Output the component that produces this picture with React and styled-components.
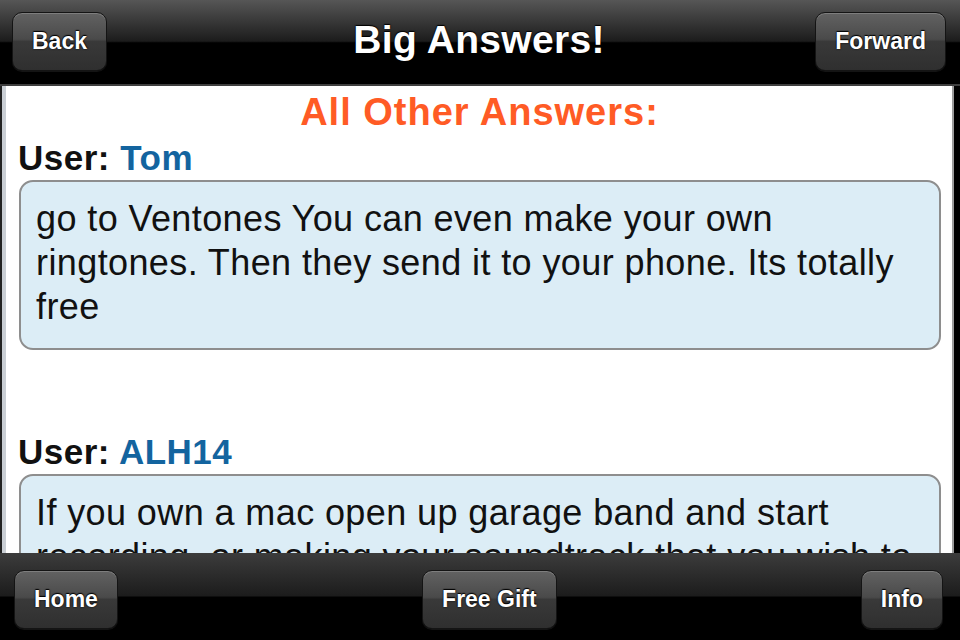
import React from 'react';
import styled, { createGlobalStyle } from 'styled-components';

const GlobalStyle = createGlobalStyle`
    html, body {
        margin: 0;
        padding: 0;
        background: #000;
    }
    body {
        font-family: "Liberation Sans", Arial, Helvetica, sans-serif;
    }
`;

const Screen = styled.div`
    width: 960px;
    height: 640px;
    display: flex;
    flex-direction: column;
    overflow: hidden;
    background: #000;
`;

const Bar = styled.div`
    flex: none;
    height: ${ props => props.height }px;
    display: ${ props => props.grid ? 'grid' : 'flex' };
    grid-template-columns: 1fr auto 1fr;
    justify-content: space-between;
    align-items: start;
    box-sizing: border-box;
    padding: ${ props => props.pad };
    background: linear-gradient(
        ${ props => props.top } 0%,
        #1c1c1c 49%,
        #000 51%,
        #000 100%
    );
    border-bottom: ${ props => props.line ? '2px solid #3e3e3e' : 'none' };
`;

const Button = styled.div`
    justify-self: ${ props => props.side || 'auto' };
    height: 59px;
    box-sizing: border-box;
    padding: 0 19px;
    border-radius: 10px;
    border: 1px solid #141414;
    background: linear-gradient(
        #626262 0%,
        #4a4a4a 46%,
        #393939 50%,
        #2f2f2f 100%
    );
    box-shadow: inset 0 1px 0 rgba(255, 255, 255, 0.18), 0 1px 0 rgba(255, 255, 255, 0.08);
    color: #fff;
    font-size: 23px;
    font-weight: bold;
    line-height: 57px;
    text-shadow: 0 -1px 1px #000, 0 0 2px #000;
    white-space: nowrap;
`;

const Title = styled.h1`
    margin: -2px 0 0;
    color: #fff;
    font-size: 39px;
    font-weight: bold;
    line-height: 59px;
    letter-spacing: 0.3px;
    text-shadow: 0 -1px 1px #000, 0 0 2px #000;
`;

const Frame = styled.div`
    flex: 1;
    min-height: 0;
    display: flex;
    padding: 0 6px 0 2px;
    background: #222;
`;

const Content = styled.div`
    flex: 1;
    overflow: hidden;
    padding: 4px 11px 0 12px;
    background: #fff;
    border-left: 4px solid #c9ced4;
    border-right: 2px solid #9c9c9c;
    box-shadow: 6px 0 0 #000;
`;

const Heading = styled.h2`
    margin: 0;
    text-align: center;
    color: #ff5b25;
    font-size: 38px;
    font-weight: bold;
    line-height: 44px;
    letter-spacing: 1px;
`;

const UserLine = styled.div`
    margin-top: 4px;
    color: #111;
    font-size: 35px;
    font-weight: bold;
    line-height: 40px;
    letter-spacing: 0.5px;
`;

const UserName = styled.span`
    color: #13649f;
`;

const Bubble = styled.div`
    margin: 2px 0 ${ props => props.gap || 0 }px 1px;
    padding: 15px 15px 19px;
    border: 2px solid #8e8e8e;
    border-radius: 14px;
    background: #dcedf6;
    color: #111;
    font-size: 36px;
    line-height: 44px;
    letter-spacing: 0.4px;
`;

const answers = [
    {
        user: 'Tom',
        text: 'go to Ventones You can even make your own ringtones. Then they send it to your phone. Its totally free',
    },
    {
        user: 'ALH14',
        text: 'If you own a mac open up garage band and start recording, or making your soundtrack that you wish to make into a ringtone.',
    },
];

const App = () => {
    return (
        <React.Fragment>
            <GlobalStyle />
            <Screen>
                <Bar grid height={86} top="#565656" pad="12px 14px 0 12px" line>
                    <Button side="start">Back</Button>
                    <Title>Big Answers!</Title>
                    <Button side="end">Forward</Button>
                </Bar>
                <Frame>
                    <Content>
                        <Heading>All Other Answers:</Heading>
                        {answers.map((a, i) => (
                            <React.Fragment key={a.user}>
                                <UserLine>User: <UserName>{a.user}</UserName></UserLine>
                                <Bubble gap={i === 0 ? 82 : 0}>{a.text}</Bubble>
                            </React.Fragment>
                        ))}
                    </Content>
                </Frame>
                <Bar height={87} top="#3c3c3c" pad="17px 17px 0 14px">
                    <Button>Home</Button>
                    <Button>Free Gift</Button>
                    <Button>Info</Button>
                </Bar>
            </Screen>
        </React.Fragment>
    )
}

export default App;
